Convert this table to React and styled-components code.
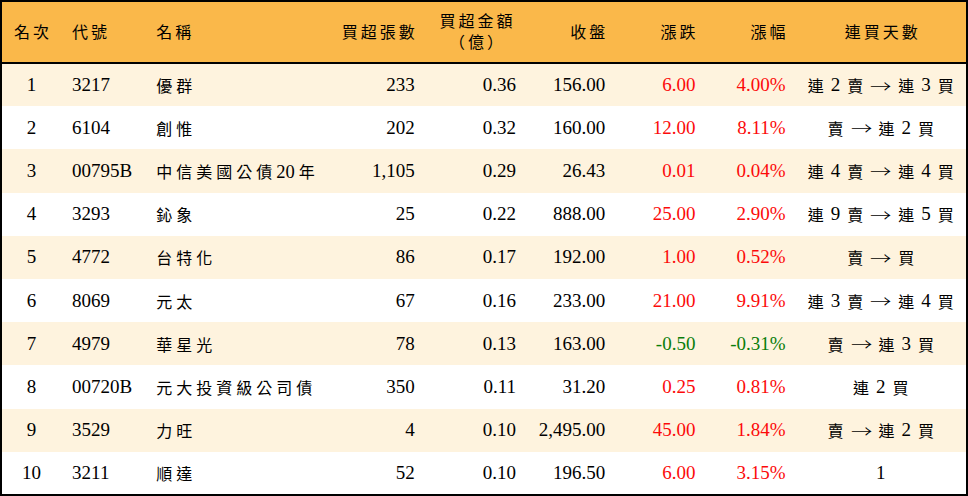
import React from "react";
import styled, { createGlobalStyle } from "styled-components";

const rows = [
  ["1", "3217", "優群", "233", "0.36", "156.00", "6.00", "4.00%", ["連", "2", "賣", "→", "連", "3", "買"]],
  ["2", "6104", "創惟", "202", "0.32", "160.00", "12.00", "8.11%", ["賣", "→", "連", "2", "買"]],
  ["3", "00795B", "中信美國公債20年", "1,105", "0.29", "26.43", "0.01", "0.04%", ["連", "4", "賣", "→", "連", "4", "買"]],
  ["4", "3293", "鈊象", "25", "0.22", "888.00", "25.00", "2.90%", ["連", "9", "賣", "→", "連", "5", "買"]],
  ["5", "4772", "台特化", "86", "0.17", "192.00", "1.00", "0.52%", ["賣", "→", "買"]],
  ["6", "8069", "元太", "67", "0.16", "233.00", "21.00", "9.91%", ["連", "3", "賣", "→", "連", "4", "買"]],
  ["7", "4979", "華星光", "78", "0.13", "163.00", "-0.50", "-0.31%", ["賣", "→", "連", "3", "買"]],
  ["8", "00720B", "元大投資級公司債", "350", "0.11", "31.20", "0.25", "0.81%", ["連", "2", "買"]],
  ["9", "3529", "力旺", "4", "0.10", "2,495.00", "45.00", "1.84%", ["賣", "→", "連", "2", "買"]],
  ["10", "3211", "順達", "52", "0.10", "196.50", "6.00", "3.15%", ["1"]],
];

// 欄位寬度
const colWidths = [60, 85, 183, 95, 101, 89, 90, 90, 171];

const GlobalStyle = createGlobalStyle`
  html, body {
    margin: 0;
    padding: 0;
    background: #ffffff;
  }
`;

// 名稱中的數字不加字距
const Name = ({ text }) =>
  text.split(/(\d+)/).map((part, i) =>
    /^\d+$/.test(part) ? <Digits key={i}>{part}</Digits> : part
  );

const Streak = ({ parts }) => (
  <StreakWrap>
    {parts.map((p, i) =>
      p === "→" ? (
        <Arrow key={i}>→</Arrow>
      ) : /\d/.test(p) ? (
        <StreakNum key={i}>{p}</StreakNum>
      ) : (
        <StreakChar key={i}>{p}</StreakChar>
      )
    )}
  </StreakWrap>
);

const App = () => {
  const toneOf = (v) => (v.startsWith("-") ? "down" : "up");

  return (
    <>
      <GlobalStyle />
      <Table>
        <colgroup>
          {colWidths.map((w, i) => (
            <col key={i} style={{ width: w }} />
          ))}
        </colgroup>
        <thead>
          <HeadRow>
            <Th $align="center">名次</Th>
            <Th $align="left">代號</Th>
            <Th $align="left">名稱</Th>
            <Th $align="right">買超張數</Th>
            <Th $align="center">
              買超金額
              <br />
              （億）
            </Th>
            <Th $align="right">收盤</Th>
            <Th $align="right">漲跌</Th>
            <Th $align="right">漲幅</Th>
            <Th $align="center">連買天數</Th>
          </HeadRow>
        </thead>
        <tbody>
          {rows.map((r, i) => (
            <Row key={r[0]} $odd={i % 2 === 0}>
              <Td $align="center">{r[0]}</Td>
              <Td $align="left">{r[1]}</Td>
              <Td $align="left" $cjk>
                <Name text={r[2]} />
              </Td>
              <Td $align="right">{r[3]}</Td>
              <Td $align="right">{r[4]}</Td>
              <Td $align="right">{r[5]}</Td>
              <Td $align="right" $tone={toneOf(r[6])}>
                {r[6]}
              </Td>
              <Td $align="right" $tone={toneOf(r[7])}>
                {r[7]}
              </Td>
              <Td $align="center">
                <Streak parts={r[8]} />
              </Td>
            </Row>
          ))}
        </tbody>
      </Table>
    </>
  );
};

// ── Styled Components ─────────────────────────────────────────
const Table = styled.table`
  width: 968px;
  border-collapse: collapse;
  table-layout: fixed;
  border: 2px solid #000000;
  font-family: "Liberation Serif", "Noto Sans CJK TC", serif;
  color: #000000;
`;

const HeadRow = styled.tr`
  height: 62px;
  background-color: #fab84a;
  border-bottom: 2px solid #000000;
`;

const Th = styled.th`
  text-align: ${(p) => p.$align};
  font-weight: 400;
  font-size: 16px;
  letter-spacing: 3px;
  line-height: 21px;
  padding: 0 7px 0 11px;
  vertical-align: middle;

  &:first-child {
    padding-left: 3px;
    padding-right: 0;
  }
  &:nth-child(3) {
    padding-left: 10px;
  }
`;

const Row = styled.tr`
  height: 43.2px;
  background-color: ${(p) => (p.$odd ? "#fef3de" : "#ffffff")};
`;

const Td = styled.td`
  text-align: ${(p) => p.$align};
  font-size: ${(p) => (p.$cjk ? "16px" : "19px")};
  letter-spacing: ${(p) => (p.$cjk ? "4px" : "0")};
  padding: 0 10px 0 11px;
  white-space: nowrap;
  color: ${(p) =>
    p.$tone === "up" ? "#fc0a0a" : p.$tone === "down" ? "#0a7d0a" : "#000000"};

  &:first-child {
    padding: 0;
  }
  &:nth-child(3) {
    padding-left: 10px;
  }
  &:last-child {
    padding: 0;
  }
`;

const Digits = styled.span`
  font-family: "Liberation Serif", serif;
  font-size: 18.5px;
  letter-spacing: 0;
  margin-right: 4px;
`;

const StreakWrap = styled.span`
  display: inline-flex;
  align-items: center;
  justify-content: center;
  gap: 7px;
`;

const StreakChar = styled.span`
  font-size: 16px;
`;

const StreakNum = styled.span`
  font-size: 19px;
`;

const Arrow = styled.span`
  font-family: "Noto Sans CJK TC", sans-serif;
  font-weight: 300;
  font-size: 17px;
  transform: scaleX(1.25);
  margin: 0 2px;
`;

export default App;
